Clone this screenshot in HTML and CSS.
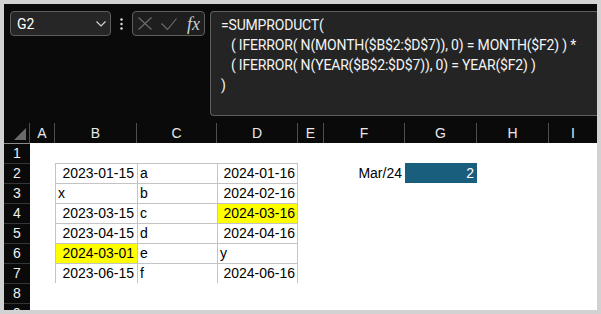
FILE: index.html
```html
<!DOCTYPE html>
<html lang="en">
<head>
    <meta charset="UTF-8">
    <meta name="viewport" content="width=device-width, initial-scale=1.0">
    <title>SUMPRODUCT month match</title>
    <link rel="stylesheet" href="styles.css">
</head>
<body>
    <div class="app">
        <!-- Name box + formula bar -->
        <div class="bar">
            <div class="namebox">
                <span>G2</span>
                <svg width="10" height="6" viewBox="0 0 10 6"><path d="M0.5 0.5 L5 5 L9.5 0.5" fill="none" stroke="#d8d8d8" stroke-width="1.1"/></svg>
            </div>
            <div class="dots">
                <svg width="3" height="12" viewBox="0 0 3 12"><circle cx="1.5" cy="1.5" r="1.2"/><circle cx="1.5" cy="6" r="1.2"/><circle cx="1.5" cy="10.5" r="1.2"/></svg>
            </div>
            <div class="fxbox">
                <svg class="cancel" width="14" height="13" viewBox="0 0 14 13"><path d="M0.5 0.5 L13.5 12.5 M13.5 0.5 L0.5 12.5"/></svg>
                <svg class="enter" width="16" height="12" viewBox="0 0 16 12"><path d="M0.5 5.5 L6.5 11.5 L15.5 0.5"/></svg>
                <span class="fx">fx</span>
            </div>
            <div class="formula">
<pre>=SUMPRODUCT(
   ( IFERROR( N(MONTH($B$2:$D$7)), 0) = MONTH($F2) ) *
   ( IFERROR( N(YEAR($B$2:$D$7)), 0) = YEAR($F2) )
)</pre>
            </div>
        </div>

        <!-- Worksheet grid -->
        <div class="sheet">
            <div class="row">
                <div class="corner"><svg width="12" height="12" viewBox="0 0 12 12"><polygon points="12,0 12,12 0,12" fill="#6a6a6a"/></svg></div>
                <div class="ch">A</div><div class="ch">B</div><div class="ch">C</div><div class="ch">D</div><div class="ch">E</div><div class="ch">F</div><div class="ch">G</div><div class="ch">H</div><div class="ch">I</div>
            </div>
            <div class="row">
                <div class="rh">1</div>
                <div class="c"></div><div class="c"></div><div class="c"></div><div class="c"></div><div class="c"></div><div class="c"></div><div class="c"></div><div class="c"></div><div class="c"></div>
            </div>
            <div class="row">
                <div class="rh">2</div>
                <div class="c"></div>
                <div class="c bd num">2023-01-15</div>
                <div class="c bd">a</div>
                <div class="c bd end num">2024-01-16</div>
                <div class="c"></div>
                <div class="c num">Mar/24</div>
                <div class="c num result">2</div>
                <div class="c"></div><div class="c"></div>
            </div>
            <div class="row">
                <div class="rh">3</div>
                <div class="c"></div>
                <div class="c bd">x</div>
                <div class="c bd">b</div>
                <div class="c bd end num">2024-02-16</div>
                <div class="c"></div><div class="c"></div><div class="c"></div><div class="c"></div><div class="c"></div>
            </div>
            <div class="row">
                <div class="rh">4</div>
                <div class="c"></div>
                <div class="c bd num">2023-03-15</div>
                <div class="c bd">c</div>
                <div class="c bd end num hit">2024-03-16</div>
                <div class="c"></div><div class="c"></div><div class="c"></div><div class="c"></div><div class="c"></div>
            </div>
            <div class="row">
                <div class="rh">5</div>
                <div class="c"></div>
                <div class="c bd num">2023-04-15</div>
                <div class="c bd">d</div>
                <div class="c bd end num">2024-04-16</div>
                <div class="c"></div><div class="c"></div><div class="c"></div><div class="c"></div><div class="c"></div>
            </div>
            <div class="row">
                <div class="rh">6</div>
                <div class="c"></div>
                <div class="c bd num hit">2024-03-01</div>
                <div class="c bd">e</div>
                <div class="c bd end">y</div>
                <div class="c"></div><div class="c"></div><div class="c"></div><div class="c"></div><div class="c"></div>
            </div>
            <div class="row">
                <div class="rh">7</div>
                <div class="c"></div>
                <div class="c bd last num">2023-06-15</div>
                <div class="c bd last">f</div>
                <div class="c bd last end num">2024-06-16</div>
                <div class="c"></div><div class="c"></div><div class="c"></div><div class="c"></div><div class="c"></div>
            </div>
            <div class="row">
                <div class="rh">8</div>
                <div class="c"></div><div class="c"></div><div class="c"></div><div class="c"></div><div class="c"></div><div class="c"></div><div class="c"></div><div class="c"></div><div class="c"></div>
            </div>
            <div class="row">
                <div class="rh">9</div>
                <div class="c"></div><div class="c"></div><div class="c"></div><div class="c"></div><div class="c"></div><div class="c"></div><div class="c"></div><div class="c"></div><div class="c"></div>
            </div>
        </div>
    </div>
</body>
</html>
```

FILE: styles.css
```css
body {
    margin: 0;
    background-color: #d2d2d2;
    font-family: "Liberation Sans", Arial, sans-serif;
}
.app {
    margin: 4px;
    width: 593px;
    height: 306px;
    background-color: #0a0a0a;
    overflow: hidden;
}

/* formula bar */
.bar {
    display: flex;
    align-items: flex-start;
    height: 119px;
    padding: 7px 0 0 6px;
    box-sizing: border-box;
}
.namebox {
    width: 101px;
    height: 25px;
    box-sizing: border-box;
    display: flex;
    align-items: center;
    justify-content: space-between;
    padding: 0 4px 0 6px;
    border: 1px solid #5e5e5e;
    border-radius: 4px;
    background-color: #262626;
    color: #ffffff;
    font-family: Roboto, sans-serif;
    font-size: 14px;
}
.dots {
    width: 21px;
    height: 25px;
    display: flex;
    align-items: center;
    justify-content: center;
    fill: #e0e0e0;
}
.fxbox {
    width: 73px;
    height: 25px;
    box-sizing: border-box;
    display: flex;
    align-items: center;
    padding-left: 5px;
    border: 1px solid #5e5e5e;
    border-radius: 4px;
    background-color: #1e1e1e;
}
.fxbox svg path {
    fill: none;
    stroke: #6e6e6e;
    stroke-width: 1.1;
}
.enter {
    margin-left: 9px;
}
.fx {
    margin-left: 10px;
    color: #cfcfcf;
    font-family: "Liberation Serif", serif;
    font-style: italic;
    font-size: 18px;
    line-height: 20px;
}
.formula {
    flex: 1;
    height: 105px;
    margin-left: 5px;
    box-sizing: border-box;
    border: 1px solid #5e5e5e;
    border-right: none;
    border-radius: 4px 0 0 4px;
    background-color: #242424;
}
.formula pre {
    margin: 0;
    padding: 3px 0 0 10px;
    color: #f4f4f4;
    font-family: Roboto, sans-serif;
    font-size: 14px;
    line-height: 20px;
    letter-spacing: -0.17px;
}

/* worksheet */
.sheet {
    height: 187px;
    overflow: hidden;
}
.row {
    display: grid;
    grid-template-columns: 26px 25px 82px 80px 81px 26px 81px 72px 72px 48px;
    height: 20px;
}
.corner, .ch {
    box-sizing: border-box;
    border-right: 1px solid #4e4e4e;
    border-bottom: 1px solid #8e8e8e;
}
.corner {
    display: flex;
    align-items: flex-end;
    justify-content: flex-end;
    padding: 0 3px 3px 0;
}
.ch {
    text-align: center;
    color: #e8e8e8;
    font-size: 14px;
    line-height: 20px;
}
.ch:last-child {
    border-right: none;
}
.rh {
    box-sizing: border-box;
    border-bottom: 1px solid #363636;
    text-align: center;
    color: #f0f0f0;
    font-size: 14px;
    line-height: 20px;
}
.c {
    padding: 0 3px;
    background-color: #ffffff;
    color: #000000;
    font-size: 14px;
    line-height: 21px;
    white-space: nowrap;
    overflow: hidden;
}
.num {
    text-align: right;
}
.bd {
    box-shadow: inset 1px 1px 0 #c4c4c4;
}
.bd.end {
    box-shadow: inset 1px 1px 0 #c4c4c4, inset -1px 0 0 #c4c4c4;
}
.bd.last {
    box-shadow: inset 1px 1px 0 #c4c4c4, inset 0 -1px 0 #c4c4c4;
}
.bd.last.end {
    box-shadow: inset 1px 1px 0 #c4c4c4, inset -1px -1px 0 #c4c4c4;
}
.hit {
    background-color: #ffff00;
}
.result {
    background-color: #1a5e7e;
    color: #ffffff;
}
```
